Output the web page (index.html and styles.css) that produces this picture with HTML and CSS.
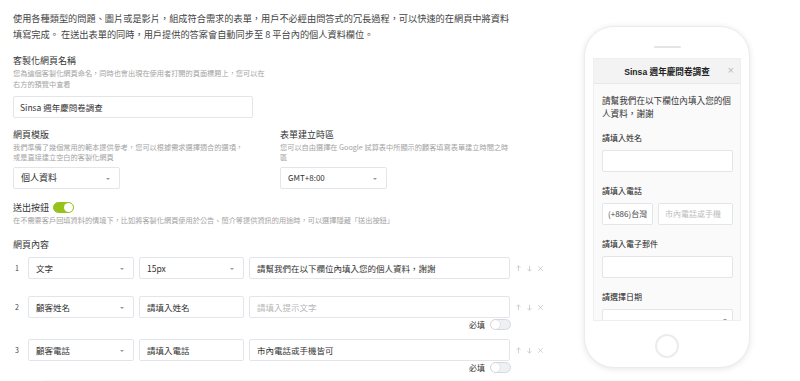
FILE: index.html
```html
<!DOCTYPE html>
<html lang="zh-Hant">
<head>
    <meta charset="UTF-8">
    <meta name="viewport" content="width=device-width, initial-scale=1.0">
    <title>客製化網頁</title>
    <link rel="stylesheet" href="styles.css">
</head>
<body>
<div class="page">
    <div class="editor">
        <p class="intro">使用各種類型的問題、圖片或是影片，組成符合需求的表單，用戶不必經由問答式的冗長過程，可以快速的在網頁中將資料填寫完成。 在送出表單的同時，用戶提供的答案會自動同步至 8 平台內的個人資料欄位。</p>

        <div class="field">
            <div class="label">客製化網頁名稱</div>
            <div class="hint hint-narrow">您為這個客製化網頁命名，同時也會出現在使用者打開的頁面標題上，您可以在右方的預覽中查看</div>
            <div class="input input-name">Sinsa 週年慶問卷調查</div>
        </div>

        <div class="two-cols">
            <div class="field">
                <div class="label">網頁模版</div>
                <div class="hint">我們準備了幾個常用的範本提供參考，您可以根據需求選擇適合的選項，或是直接建立空白的客製化網頁</div>
                <div class="select select-small">個人資料<span class="caret"></span></div>
            </div>
            <div class="field">
                <div class="label">表單建立時區</div>
                <div class="hint">您可以自由選擇在 Google 試算表中所顯示的顧客填寫表單建立時間之時區</div>
                <div class="select select-small">GMT+8:00<span class="caret"></span></div>
            </div>
        </div>

        <div class="field">
            <div class="label label-row">送出按鈕 <span class="toggle on"></span></div>
            <div class="hint">在不需要客戶回填資料的情境下，比如將客製化網頁使用於公告、簡介等提供資訊的用途時，可以選擇隱藏「送出按鈕」</div>
        </div>

        <div class="field">
            <div class="label">網頁內容</div>
            <div class="rows">
                <div class="row first">
                    <span class="num">1</span>
                    <div class="select col-type">文字<span class="caret"></span></div>
                    <div class="select col-size">15px<span class="caret"></span></div>
                    <div class="input col-text">請幫我們在以下欄位內填入您的個人資料，謝謝</div>
                    <div class="actions">
                        <svg viewBox="0 0 8 8"><path d="M4 7V1M1.8 3.2L4 1l2.2 2.2"/></svg>
                        <svg viewBox="0 0 8 8"><path d="M4 1v6M1.8 4.8L4 7l2.2-2.2"/></svg>
                        <svg viewBox="0 0 8 8"><path d="M1.5 1.5l5 5M6.5 1.5l-5 5"/></svg>
                    </div>
                </div>
                <div class="row">
                    <span class="num">2</span>
                    <div class="select col-type">顧客姓名<span class="caret"></span></div>
                    <div class="input col-size">請填入姓名</div>
                    <div class="input col-text placeholder">請填入提示文字</div>
                    <div class="actions">
                        <svg viewBox="0 0 8 8"><path d="M4 7V1M1.8 3.2L4 1l2.2 2.2"/></svg>
                        <svg viewBox="0 0 8 8"><path d="M4 1v6M1.8 4.8L4 7l2.2-2.2"/></svg>
                        <svg viewBox="0 0 8 8"><path d="M1.5 1.5l5 5M6.5 1.5l-5 5"/></svg>
                    </div>
                </div>
                <div class="required">必填 <span class="toggle"></span></div>
                <div class="row">
                    <span class="num">3</span>
                    <div class="select col-type">顧客電話<span class="caret"></span></div>
                    <div class="input col-size">請填入電話</div>
                    <div class="input col-text">市內電話或手機皆可</div>
                    <div class="actions">
                        <svg viewBox="0 0 8 8"><path d="M4 7V1M1.8 3.2L4 1l2.2 2.2"/></svg>
                        <svg viewBox="0 0 8 8"><path d="M4 1v6M1.8 4.8L4 7l2.2-2.2"/></svg>
                        <svg viewBox="0 0 8 8"><path d="M1.5 1.5l5 5M6.5 1.5l-5 5"/></svg>
                    </div>
                </div>
                <div class="required">必填 <span class="toggle"></span></div>
            </div>
        </div>
    </div>

    <div class="preview">
        <div class="phone">
            <div class="speaker"></div>
            <div class="screen">
                <div class="screen-head">
                    <span class="screen-title">Sinsa 週年慶問卷調查</span>
                    <span class="screen-close">×</span>
                </div>
                <div class="screen-body">
                    <p class="screen-intro">請幫我們在以下欄位內填入您的個人資料，謝謝</p>
                    <div class="m-label first">請填入姓名</div>
                    <div class="m-input"></div>
                    <div class="m-label">請填入電話</div>
                    <div class="m-pair">
                        <div class="m-input m-code">(+886)台灣</div>
                        <div class="m-input m-phone">市內電話或手機</div>
                    </div>
                    <div class="m-label">請填入電子郵件</div>
                    <div class="m-input"></div>
                    <div class="m-label">請選擇日期</div>
                    <div class="m-input m-select"><span class="caret"></span></div>
                </div>
            </div>
            <div class="home"></div>
        </div>
    </div>
</div>
<div class="page-foot"></div>
</body>
</html>
```

FILE: styles.css
```css
body {
    margin: 0;
    padding: 0;
    background: #fff;
    color: #333;
    font-family: "Noto Sans CJK TC", "Noto Sans", sans-serif;
    overflow: hidden;
}

.page {
    display: flex;
}

.editor {
    width: 560px;
    padding: 10px 0 0 13px;
    box-sizing: border-box;
}

.intro {
    margin: 0;
    width: 505px;
    font-size: 9.2px;
    line-height: 16px;
    color: #444;
}

.field {
    margin-top: 12px;
}

.label {
    font-size: 9px;
    line-height: 13px;
    color: #333;
}

.label-row {
    display: flex;
    align-items: center;
    gap: 4px;
}

.hint {
    margin-top: 1px;
    font-size: 7.2px;
    line-height: 11px;
    color: #a3a3a3;
}

.hint-narrow {
    width: 255px;
}

.input,
.select {
    height: 22px;
    box-sizing: border-box;
    border: 1px solid #e3e5ea;
    border-radius: 2px;
    background: #fff;
    font-size: 8.5px;
    line-height: 20px;
    padding: 0 7px;
    color: #333;
    white-space: nowrap;
    overflow: hidden;
}

.input-name {
    width: 240px;
    margin-top: 6px;
    padding-left: 6px;
}

.select {
    position: relative;
}

.caret {
    position: absolute;
    right: 9px;
    top: 10px;
    border-left: 2px solid transparent;
    border-right: 2px solid transparent;
    border-top: 2px solid #999;
}

.two-cols {
    display: grid;
    grid-template-columns: 240px 240px;
    column-gap: 27px;
}

.two-cols .field {
    margin-top: 10px;
}

.two-cols .hint {
    line-height: 10px;
    width: 235px;
}

.two-cols .field:last-child .hint {
    width: 231px;
}

.select-small {
    width: 107px;
    margin-top: 5px;
}

.two-cols .field:first-child .select-small {
    font-size: 9px;
}

.two-cols .field:last-child .select-small {
    font-size: 8px;
}

.toggle {
    display: inline-block;
    position: relative;
    width: 21px;
    height: 11px;
    box-sizing: border-box;
    border-radius: 6px;
    background: #eef0f4;
    border: 1px solid #d5d9e0;
}

.toggle::after {
    content: "";
    position: absolute;
    left: 0;
    top: 0;
    width: 9px;
    height: 9px;
    border-radius: 50%;
    background: #fff;
    box-shadow: 0 0 0 0.5px #cfd3da;
}

.toggle.on {
    background: #97c21b;
    border-color: #97c21b;
}

.toggle.on::after {
    left: auto;
    right: 0;
    box-shadow: none;
}

.rows {
    margin-top: 6px;
}

.row {
    display: flex;
    align-items: center;
    gap: 5px;
}

.row.first {
    margin-bottom: 17px;
}

.num {
    width: 10px;
    font-size: 7px;
    color: #444;
    padding-left: 2px;
    box-sizing: border-box;
}

.col-type {
    width: 106px;
}

.col-size {
    width: 105px;
}

.col-text {
    width: 261px;
}

.placeholder {
    color: #b8b8b8;
}

.actions {
    display: flex;
    gap: 4px;
}

.actions svg {
    width: 7px;
    height: 7px;
    fill: none;
    stroke: #c4c4c4;
    stroke-width: 0.9;
}

.required {
    width: 498px;
    height: 11px;
    margin: 1px 0 9px;
    display: flex;
    justify-content: flex-end;
    align-items: center;
    gap: 5px;
    font-size: 8px;
    color: #333;
}

/* 手機預覽 */
.preview {
    flex: 1;
    padding: 26px 0 0 24px;
}

.phone {
    width: 166px;
    height: 342px;
    box-sizing: border-box;
    border: 1px solid #ececec;
    border-radius: 30px;
    background: #fff;
    box-shadow: 0 1px 6px rgba(0, 0, 0, 0.1);
    padding: 19px 7px 0;
    display: flex;
    flex-direction: column;
    align-items: center;
}

.speaker {
    width: 27px;
    height: 2px;
    border-radius: 1px;
    background: #e4e4e4;
}

.screen {
    margin-top: 10px;
    width: 148px;
    height: 263px;
    overflow: hidden;
    background: #fafafa;
    border: 1px solid #efefef;
    box-sizing: border-box;
}

.screen-head {
    height: 25px;
    background: #f3f3f3;
    border-bottom: 1px solid #e8e8e8;
    box-sizing: border-box;
    display: flex;
    align-items: center;
    justify-content: center;
    position: relative;
    font-family: "Liberation Sans", "Noto Sans CJK TC", sans-serif;
}

.screen-title {
    font-size: 8.6px;
    font-weight: bold;
    color: #222;
}

.screen-close {
    position: absolute;
    right: 6px;
    top: 5px;
    font-size: 11px;
    color: #bbb;
}

.screen-body {
    padding: 0 7px 0 8px;
}

.screen-intro {
    margin: 10px 0 0;
    font-size: 8.6px;
    line-height: 13px;
    color: #333;
}

.m-label {
    margin-top: 12px;
    font-size: 8px;
    line-height: 13px;
    color: #222;
}

.m-label.first {
    margin-top: 11px;
}

.m-input {
    margin-top: 6px;
    height: 22px;
    box-sizing: border-box;
    background: #fff;
    border: 1px solid #e3e5ea;
    border-radius: 2px;
    font-size: 8px;
    line-height: 20px;
    padding: 0 6px;
    white-space: nowrap;
    overflow: hidden;
    position: relative;
}

.m-pair {
    display: flex;
    gap: 5px;
}

.m-code {
    width: 51px;
    color: #444;
    padding: 0 5px;
}

.m-phone {
    flex: 1;
    color: #bdbdbd;
}

.m-select .caret {
    top: 9px;
    right: 5px;
}

.home {
    margin-top: 13px;
    width: 24px;
    height: 24px;
    box-sizing: border-box;
    border: 2px solid #ececec;
    border-radius: 50%;
}

.page-foot {
    margin: 0 45px 0 40px;
    height: 10px;
    border-radius: 6px 6px 0 0;
    box-shadow: 0 -1px 3px rgba(0, 0, 0, 0.05);
}
```
